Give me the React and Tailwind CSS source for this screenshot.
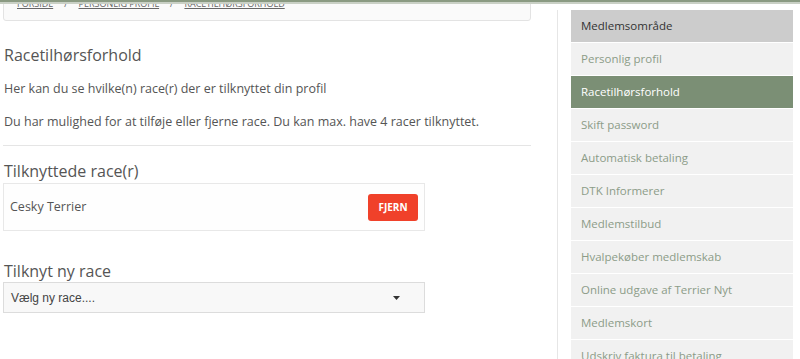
import React from 'react';

const menuItems = [
  'Personlig profil',
  'Racetilhørsforhold',
  'Skift password',
  'Automatisk betaling',
  'DTK Informerer',
  'Medlemstilbud',
  'Hvalpekøber medlemskab',
  'Online udgave af Terrier Nyt',
  'Medlemskort',
  'Udskriv faktura til betaling',
];

const App = () => {
  return (
    <div className="relative h-[359px] w-[800px] overflow-hidden bg-white font-['Open_Sans',sans-serif] text-[#555]">
      {/* top header edge */}
      <div className="absolute left-0 top-0 z-10 h-[4px] w-full border-b-2 border-[#c9d0c5] bg-[#8a9a82]" />

      <div className="flex">
        {/* main column */}
        <div className="w-[557px] pl-[3px] pr-[26px]">
          <div className="-mt-[8px] h-[29px] rounded-b-[3px] border border-[#e3e3e3] bg-[#fafafa] px-[13px] pt-[5px] text-[9px] uppercase leading-[12px] text-[#666]">
            <a href="#" className="underline">Forside</a>
            <span className="mx-[11px]">/</span>
            <a href="#" className="underline">Personlig profil</a>
            <span className="mx-[11px]">/</span>
            <a href="#" className="underline">Racetilhørsforhold</a>
          </div>

          <div className="pl-[1px]">
            <h1 className="mt-[22px] text-[16px] leading-[24px] text-[#555]">Racetilhørsforhold</h1>
            <p className="mt-[12px] text-[12.5px] leading-[20px]">Her kan du se hvilke(n) race(r) der er tilknyttet din profil</p>
            <p className="mt-[13px] text-[12.5px] leading-[20px]">Du har mulighed for at tilføje eller fjerne race. Du kan max. have 4 racer tilknyttet.</p>
          </div>
          <div className="mt-[13px] border-t border-[#e5e5e5]" />

          <h2 className="mt-[13px] pl-[1px] text-[16px] leading-[24px] text-[#555]">Tilknyttede race(r)</h2>
          <div className="flex h-[48px] w-[422px] items-center justify-between border border-[#e8e8e8] bg-[#fefefe] pl-[6px] pr-[6px]">
            <span className="text-[12.5px]">Cesky Terrier</span>
            <button className="h-[27px] w-[50px] rounded-[3px] bg-[#f0412a] text-[10px] font-bold text-white">FJERN</button>
          </div>

          <h2 className="mt-[29px] pl-[1px] text-[16px] leading-[22px] text-[#555]">Tilknyt ny race</h2>
          <div className="flex h-[31px] w-[422px] items-center justify-between border border-[#dcdcdc] bg-[#f8f8f8] pl-[7px] pr-[24px] font-['Liberation_Sans',sans-serif] text-[12px] text-[#444]">
            <span>Vælg ny race....</span>
            <svg width="7" height="4" viewBox="0 0 7 4"><path d="M0 0h7L3.5 4z" fill="#333" /></svg>
          </div>
        </div>

        {/* sidebar */}
        <div className="mt-[10px] h-[400px] border-l border-[#e6e6e6] pl-[13px]">
          <div className="w-[222px] text-[11.5px] leading-[20px]">
            <div className="flex h-[32px] items-center bg-[#cccccc] px-[10px] text-[#333]">Medlemsområde</div>
            {menuItems.map((item) => {
              const active = item === 'Racetilhørsforhold';
              return (
                <div
                  key={item}
                  className={`mt-[1px] flex h-[32px] items-center px-[10px] ${active ? 'bg-[#7b8f75] text-white' : 'bg-[#f1f1f1] text-[#8c9c88]'}`}
                >
                  {item}
                </div>
              );
            })}
          </div>
        </div>
      </div>
    </div>
  );
};

export default App;
